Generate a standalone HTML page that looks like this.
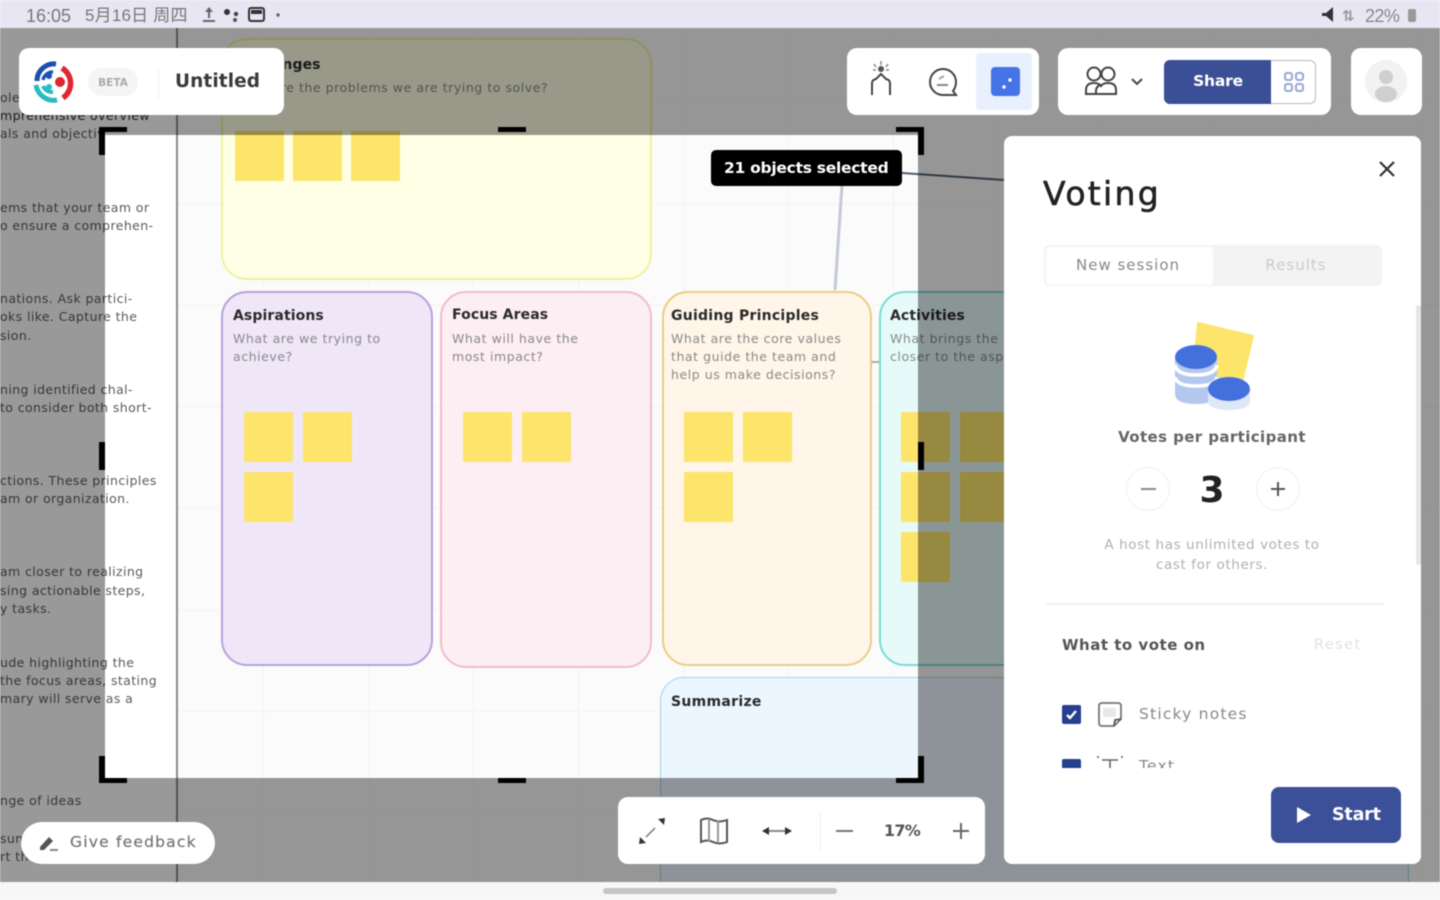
<!DOCTYPE html>
<html lang="zh"><head><meta charset="utf-8"><title>Voting</title>
<style>
html,body{margin:0;padding:0;width:1440px;height:900px;overflow:hidden;background:#fff}
#r{position:absolute;left:0;top:0;width:1440px;height:900px;overflow:hidden;filter:blur(.6px);font-family:"DejaVu Sans","Liberation Sans","Noto Sans CJK SC",sans-serif}
#r div,#r span,#r svg{position:absolute;box-sizing:border-box}
.t{white-space:nowrap;line-height:18px;margin-top:1px}
.c{transform:translateX(-50%)}
.card{border-radius:26px;border:2px solid}
.s{width:49px;height:50px;background:#fde56c}
.h{font-size:14px;font-weight:700;color:#2a2a2a;letter-spacing:.1px;margin-top:2px}
.d{font-size:12.5px;color:#8a8a8a;letter-spacing:.55px}
.l{font-size:12.5px;color:#5c5c5c;letter-spacing:.4px}
.ov{background:rgba(0,0,0,.4)}
.b{background:#000}
.w{background:#fff;border-radius:10px}
</style></head><body><div id="r">

<!-- canvas -->
<div style="left:0;top:28px;width:1440px;height:854px;background-color:#fbfbfb;background-image:linear-gradient(#f3f3f3 1px,transparent 1px),linear-gradient(90deg,#f3f3f3 1px,transparent 1px);background-size:105px 101.6px;background-position:53px -28px"></div>
<div style="left:0;top:28px;width:176px;height:854px;background:#fff"></div>
<div style="left:176px;top:28px;width:2px;height:854px;background:#8b8b8b"></div>

<div class="t l" style="left:0;top:88px">ole</div>
<div class="t l" style="left:0;top:106px;color:#333">mprehensive overview</div>
<div class="t l" style="left:0;top:124px">als and objectiv</div>
<div class="t l" style="left:0;top:198px">ems that your team or</div>
<div class="t l" style="left:0;top:216px">o ensure a comprehen-</div>
<div class="t l" style="left:0;top:289px">nations. Ask partici-</div>
<div class="t l" style="left:0;top:307px">oks like. Capture the</div>
<div class="t l" style="left:0;top:326px">sion.</div>
<div class="t l" style="left:0;top:380px">ning identified chal-</div>
<div class="t l" style="left:0;top:398px">to consider both short-</div>
<div class="t l" style="left:0;top:471px">ctions. These principles</div>
<div class="t l" style="left:0;top:489px">am or organization.</div>
<div class="t l" style="left:0;top:562px">am closer to realizing</div>
<div class="t l" style="left:0;top:581px">sing actionable steps,</div>
<div class="t l" style="left:0;top:599px">y tasks.</div>
<div class="t l" style="left:0;top:653px">ude highlighting the</div>
<div class="t l" style="left:0;top:671px">the focus areas, stating</div>
<div class="t l" style="left:0;top:689px">mary will serve as a</div>
<div class="t l" style="left:0;top:791px">nge of ideas</div>
<div class="t l" style="left:0;top:829px">sum</div>
<div class="t l" style="left:0;top:847px">rt th</div>

<svg style="left:0;top:0" width="1440" height="900"><path d="M902 173L1004 180" stroke="#4f5f70" stroke-width="2" fill="none"/><path d="M842 185L835 290" stroke="#c3cad6" stroke-width="3" fill="none"/><path d="M872 362H880" stroke="#aaa" stroke-width="2"/><path d="M1090 860V882M1168 860V882" stroke="#a8cde6" stroke-width="1.5"/></svg>

<!-- cards -->
<div class="card" style="left:221px;top:38px;width:431px;height:242px;background:#ffffe6;border-color:#eff29c"></div>
<div class="t h" style="left:233px;top:54px;clip-path:inset(0 0 0 52px)">Challenges</div>
<div class="t d" style="left:233px;top:78px;clip-path:inset(0 0 0 50px)">What are the problems we are trying to solve?</div>
<div class="s" style="left:235px;top:131px"></div><div class="s" style="left:293px;top:131px"></div><div class="s" style="left:351px;top:131px"></div>

<div class="card" style="left:221px;top:291px;width:212px;height:375px;background:#efe6f8;border-color:#b9a2d9"></div>
<div class="t h" style="left:233px;top:305px">Aspirations</div>
<div class="t d" style="left:233px;top:329px">What are we trying to</div>
<div class="t d" style="left:233px;top:347px">achieve?</div>
<div class="s" style="left:244px;top:412px"></div><div class="s" style="left:303px;top:412px"></div><div class="s" style="left:244px;top:472px"></div>

<div class="card" style="left:440px;top:291px;width:212px;height:377px;background:#fdeef3;border-color:#f2bccb"></div>
<div class="t h" style="left:452px;top:304px">Focus Areas</div>
<div class="t d" style="left:452px;top:329px">What will have the</div>
<div class="t d" style="left:452px;top:347px">most impact?</div>
<div class="s" style="left:463px;top:412px"></div><div class="s" style="left:522px;top:412px"></div>

<div class="card" style="left:662px;top:291px;width:210px;height:375px;background:#fff5e8;border-color:#eccd86"></div>
<div class="t h" style="left:671px;top:305px;letter-spacing:.25px">Guiding Principles</div>
<div class="t d" style="left:671px;top:329px">What are the core values</div>
<div class="t d" style="left:671px;top:347px">that guide the team and</div>
<div class="t d" style="left:671px;top:365px">help us make decisions?</div>
<div class="s" style="left:684px;top:412px"></div><div class="s" style="left:743px;top:412px"></div><div class="s" style="left:684px;top:472px"></div>

<div class="card" style="left:879px;top:291px;width:230px;height:375px;background:#e6fbf9;border-color:#79ddd2"></div>
<div class="t h" style="left:890px;top:305px">Activities</div>
<div class="t d" style="left:890px;top:329px">What brings the</div>
<div class="t d" style="left:890px;top:347px">closer to the aspi</div>
<div class="s" style="left:901px;top:412px"></div><div class="s" style="left:960px;top:412px"></div><div class="s" style="left:901px;top:472px"></div><div class="s" style="left:960px;top:472px"></div><div class="s" style="left:901px;top:532px"></div>

<div style="left:660px;top:677px;width:749px;height:260px;background:#ebf6fe;border:1.5px solid #a3d2ea;border-radius:24px"></div>
<div class="t h" style="left:671px;top:691px;letter-spacing:.3px">Summarize</div>

<!-- dim overlay -->
<div class="ov" style="left:0;top:28px;width:1440px;height:107px"></div>
<div class="ov" style="left:0;top:778px;width:1440px;height:104px"></div>
<div class="ov" style="left:0;top:135px;width:105px;height:643px"></div>
<div class="ov" style="left:918px;top:135px;width:522px;height:643px"></div>

<!-- handles -->
<div class="b" style="left:99px;top:127px;width:28px;height:5px"></div><div class="b" style="left:99px;top:127px;width:6px;height:28px"></div>
<div class="b" style="left:896px;top:127px;width:28px;height:5px"></div><div class="b" style="left:918px;top:127px;width:6px;height:28px"></div>
<div class="b" style="left:99px;top:778px;width:28px;height:5px"></div><div class="b" style="left:99px;top:756px;width:6px;height:27px"></div>
<div class="b" style="left:896px;top:778px;width:28px;height:5px"></div><div class="b" style="left:918px;top:756px;width:6px;height:27px"></div>
<div class="b" style="left:498px;top:127px;width:28px;height:5px"></div><div class="b" style="left:498px;top:778px;width:28px;height:5px"></div>
<div class="b" style="left:99px;top:442px;width:6px;height:28px"></div><div class="b" style="left:918px;top:442px;width:6px;height:28px"></div>

<div style="left:711px;top:150px;width:191px;height:36px;background:#000;border-radius:5px"></div>
<div class="t" style="left:724px;top:158px;color:#fff;font-size:15.5px;font-weight:700;letter-spacing:-.27px">21 objects selected</div>

<!-- status bar -->
<div style="left:0;top:0;width:1440px;height:28px;background:#e8e6f2"></div>
<div class="t" style="left:26px;top:6px;font-size:18px;color:#777;letter-spacing:0;font-family:'Liberation Sans','Noto Sans CJK SC',sans-serif">16:05</div>
<div class="t" style="left:85px;top:6px;font-size:17px;color:#777;letter-spacing:.2px;font-family:'Liberation Sans','Noto Sans CJK SC',sans-serif">5月16日 周四</div>
<svg style="left:200px;top:5px" width="90" height="20"><path d="M9 2l4 5h-3v6H8V7H5zM3 15h12v2H3z" fill="#666"/><circle cx="27" cy="7" r="3" fill="#333"/><circle cx="36" cy="9" r="2.2" fill="#444"/><circle cx="35" cy="15" r="2" fill="#555"/><rect x="49" y="3" width="15" height="13" rx="2" fill="none" stroke="#333" stroke-width="2"/><path d="M51 5h11v4H51z" fill="#333"/><circle cx="78" cy="10" r="1.7" fill="#666"/></svg>
<svg style="left:1320px;top:6px" width="16" height="17"><path d="M13 1L6 7H2v3h4l7 6z" fill="#333"/></svg>
<div class="t" style="left:1342px;top:6px;font-size:15px;color:#999;font-weight:700">⇅</div>
<div class="t" style="left:1365px;top:6px;font-size:18px;color:#888;letter-spacing:-.6px;font-family:'Liberation Sans',sans-serif">22%</div>
<div style="left:1408px;top:9px;width:8px;height:13px;background:#999;border-radius:2px"></div>

<!-- top-left card -->
<div class="w" style="left:19px;top:48px;width:265px;height:67px"></div>
<svg style="left:33px;top:60px" width="42" height="44" viewBox="0 0 42 44"><path d="M4 21A17 17 0 0 1 23 4" fill="none" stroke="#1c4fae" stroke-width="5"/><path d="M10 20A10 10 0 0 1 20 12" fill="none" stroke="#1c4fae" stroke-width="3.5"/><circle cx="16" cy="16" r="3" fill="#1c4fae"/><path d="M3 25A18 18 0 0 0 24 40" fill="none" stroke="#2bbcc0" stroke-width="5"/><path d="M10 26A10 10 0 0 0 20 32" fill="none" stroke="#2bbcc0" stroke-width="4"/><circle cx="16" cy="27" r="3" fill="#2bbcc0"/><path d="M29 8A18 18 0 0 1 30 38" fill="none" stroke="#e0262e" stroke-width="5.5"/><circle cx="27" cy="22" r="5" fill="#e0262e"/></svg>
<div style="left:88px;top:68px;width:50px;height:28px;background:#f5f5f5;border-radius:14px"></div>
<div class="t c" style="left:113px;top:73px;font-size:10.5px;color:#aaa;font-weight:700">BETA</div>
<div style="left:158px;top:68px;width:1px;height:32px;background:#f0f0f0"></div>
<div class="t" style="left:175px;top:71px;font-size:18.5px;font-weight:700;color:#3a3a3a;line-height:20px;letter-spacing:.1px">Untitled</div>

<!-- top toolbar -->
<div class="w" style="left:847px;top:48px;width:192px;height:67px"></div>
<svg style="left:860px;top:58px" width="42" height="42" fill="none" stroke="#444" stroke-width="2"><path d="M12 37V25q0-3 4-4l5-5 5 5q4 1 4 4v12"/><path d="M21 3v4M14 6l2 3M28 6l-2 3M13 12h3M26 12h3" stroke="#888" stroke-width="1.5"/><circle cx="21" cy="11" r="3" fill="#555" stroke="none"/></svg>
<svg style="left:925px;top:64px" width="36" height="36" fill="none" stroke="#444" stroke-width="2"><path d="M18 5a13 13 0 1 0 0 26h13l-3-4q3-4 3-9A13 13 0 0 0 18 5z"/><path d="M12 21h11" stroke="#888"/><path d="M14 15l5-3" stroke="#aaa"/></svg>
<div style="left:976px;top:53px;width:56px;height:57px;background:#e9f0fd;border-radius:4px"></div>
<div style="left:991px;top:67px;width:29px;height:29px;background:#4673e6;border-radius:4px"></div>
<svg style="left:991px;top:67px" width="29" height="29"><circle cx="19" cy="13" r="1.7" fill="#fff"/><circle cx="13" cy="20" r="1.7" fill="#fff"/></svg>

<div class="w" style="left:1058px;top:48px;width:273px;height:67px"></div>
<svg style="left:1083px;top:64px" width="36" height="34" fill="none" stroke="#444" stroke-width="2"><circle cx="11" cy="10" r="6.5"/><circle cx="25" cy="10" r="6.5"/><path d="M3 30v-4q0-7 8-7 5 0 7 3 2-3 7-3 8 0 8 7v4z"/><path d="M13 30v-3q0-5 5-6"/></svg>
<svg style="left:1129px;top:76px" width="16" height="12" fill="none" stroke="#444" stroke-width="2"><path d="M3 3l5 5 5-5"/></svg>
<div style="left:1164px;top:60px;width:152px;height:44px;background:#fff;border:1.5px solid #bbb;border-radius:6px"></div>
<div style="left:1164px;top:60px;width:107px;height:44px;background:#3a4f96;border-radius:6px 0 0 6px"></div>
<div class="t c" style="left:1218px;top:71px;font-size:15.5px;font-weight:700;color:#fff;letter-spacing:-.2px">Share</div>
<svg style="left:1282px;top:70px" width="24" height="24" fill="none" stroke="#98a8d4" stroke-width="2"><rect x="3" y="3" width="7" height="7" rx="2"/><rect x="14" y="3" width="7" height="7" rx="2"/><rect x="3" y="14" width="7" height="7" rx="2"/><rect x="14" y="14" width="7" height="7" rx="2"/></svg>

<div class="w" style="left:1351px;top:48px;width:71px;height:67px"></div>
<div style="left:1365px;top:60px;width:42px;height:43px;background:#f2f2f2;border-radius:50%"></div>
<svg style="left:1365px;top:60px" width="42" height="43" fill="#cfcfcf"><circle cx="21" cy="17" r="7"/><ellipse cx="21" cy="34" rx="11" ry="8"/></svg>

<!-- voting panel -->
<div class="w" style="left:1004px;top:136px;width:417px;height:728px;border-radius:8px"></div>
<div class="t" style="left:1043px;top:173px;font-size:33px;line-height:40px;font-weight:400;color:#222;letter-spacing:2.3px;-webkit-text-stroke:.6px #222">Voting</div>
<svg style="left:1377px;top:159px" width="20" height="20" stroke="#333" stroke-width="2.2"><path d="M3 3l14 14M17 3L3 17"/></svg>
<div style="left:1044px;top:245px;width:338px;height:41px;background:#f3f3f3;border-radius:5px"></div>
<div style="left:1046px;top:247px;width:167px;height:38px;background:#fff;border-radius:4px"></div>
<div class="t c" style="left:1128px;top:255px;font-size:15px;color:#888;letter-spacing:1px">New session</div>
<div class="t c" style="left:1296px;top:255px;font-size:15px;color:#ccc;letter-spacing:1px">Results</div>
<div style="left:1416px;top:305px;width:5px;height:260px;background:#e6e6e6;border-radius:3px"></div>

<svg style="left:1165px;top:315px" width="100" height="100"><path d="M33 8l55 13-12 50-48-9z" fill="#fde56c" stroke="#fde56c" stroke-width="2" stroke-linejoin="round"/><path d="M10 41v38q0 10 21 10t21-10V41z" fill="#b4c8ee"/><path d="M10 62q2 9 21 9t21-9M10 50q2 10 21 10t21-10" fill="none" stroke="#fff" stroke-width="3.5"/><ellipse cx="31" cy="42" rx="21" ry="12" fill="#4470de"/><path d="M43 74v13q2 8 21 8t21-8V74z" fill="#dfe6f6"/><ellipse cx="64" cy="74" rx="21" ry="12" fill="#4470de"/></svg>

<div class="t c" style="left:1212px;top:427px;font-size:15px;font-weight:700;color:#666;letter-spacing:.4px">Votes per participant</div>
<div style="left:1126px;top:467px;width:44px;height:44px;border:1px solid #eee;border-radius:50%"></div>
<div style="left:1141px;top:488px;width:15px;height:2px;background:#888"></div>
<div class="t c" style="left:1212px;top:471px;font-size:36px;line-height:38px;font-weight:700;color:#222">3</div>
<div style="left:1256px;top:467px;width:44px;height:44px;border:1px solid #eee;border-radius:50%"></div>
<div style="left:1271px;top:488px;width:14px;height:2px;background:#555"></div><div style="left:1277px;top:482px;width:2px;height:14px;background:#555"></div>
<div class="t c" style="left:1212px;top:535px;font-size:13.5px;color:#b0b0b0;letter-spacing:.6px">A host has unlimited votes to</div>
<div class="t c" style="left:1212px;top:555px;font-size:13.5px;color:#b0b0b0;letter-spacing:.6px">cast for others.</div>
<div style="left:1046px;top:603px;width:338px;height:2px;background:#f1f1f1"></div>
<div class="t" style="left:1062px;top:635px;font-size:15px;font-weight:700;color:#555;letter-spacing:.5px">What to vote on</div>
<div class="t" style="left:1314px;top:635px;font-size:14.5px;color:#e2e2e2;letter-spacing:1.4px">Reset</div>
<div style="left:1062px;top:705px;width:19px;height:19px;background:#24408e;border-radius:2px"></div>
<svg style="left:1062px;top:705px" width="19" height="19" fill="none" stroke="#fff" stroke-width="2.4"><path d="M5 10l3 3 6-7"/></svg>
<svg style="left:1096px;top:700px" width="28" height="28" fill="none" stroke="#777" stroke-width="1.8"><path d="M3 6q0-3 3-3h16q3 0 3 3v13l-7 7H6q-3 0-3-3z"/><rect x="7" y="8" width="13" height="9" fill="#e8e8e8" stroke="none"/><path d="M18 26l1-6 6-1" stroke="#555"/></svg>
<div class="t" style="left:1139px;top:704px;font-size:15.5px;color:#888;letter-spacing:1.2px">Sticky notes</div>
<div style="left:1004px;top:755px;width:412px;height:13px;overflow:hidden">
  <div style="left:58px;top:4px;width:19px;height:19px;background:#24408e;border-radius:2px"></div>
  <div class="t" style="left:135px;top:1px;font-size:15.5px;color:#888;letter-spacing:1.2px">Text</div>
  <svg style="left:92px;top:0" width="28" height="13" fill="none" stroke="#666" stroke-width="1.6"><path d="M2 1v2M26 1v2M6 5h16M14 5v8"/></svg>
</div>
<div style="left:1271px;top:787px;width:130px;height:56px;background:#3b5098;border-radius:8px"></div>
<svg style="left:1294px;top:805px" width="20" height="20"><path d="M3 2l14 8-14 8z" fill="#fff"/></svg>
<div class="t" style="left:1332px;top:805px;font-size:17.5px;font-weight:700;color:#fff;letter-spacing:-.2px">Start</div>

<!-- bottom toolbar -->
<div class="w" style="left:618px;top:797px;width:367px;height:67px"></div>
<svg style="left:636px;top:815px" width="32" height="32" fill="none" stroke="#444" stroke-width="1.6"><path d="M19 13l-9 9" stroke="#888"/><path d="M3 29l1-7 6 6z" fill="#333" stroke="none"/><path d="M29 3l-7 1 6 6z" fill="#333" stroke="none"/></svg>
<svg style="left:698px;top:816px" width="32" height="30" fill="none" stroke="#555" stroke-width="2"><path d="M3 4q6-3 12 0 6 3 14 0v22q-8 3-14 0-6-3-12 0z"/><path d="M11 3v23M20 4v23" stroke="#999"/></svg>
<svg style="left:760px;top:822px" width="34" height="18" fill="#333"><path d="M2 9l7-4v8zM32 9l-7-4v8z"/><path d="M9 8h16v2H9z" fill="#888"/></svg>
<div style="left:820px;top:811px;width:1px;height:39px;background:#eee"></div>
<div style="left:836px;top:830px;width:17px;height:2px;background:#777"></div>
<div class="t c" style="left:902px;top:821px;font-size:16px;font-weight:700;color:#555;letter-spacing:-.7px">17%</div>
<div style="left:953px;top:830px;width:16px;height:2px;background:#666"></div><div style="left:960px;top:823px;width:2px;height:16px;background:#666"></div>

<!-- feedback -->
<div style="left:21px;top:822px;width:194px;height:42px;background:#fff;border-radius:21px"></div>
<svg style="left:38px;top:833px" width="24" height="20"><path d="M2 14l9-10 4 4-9 9H2z" fill="#555"/><path d="M12 16h8v2h-8z" fill="#888"/></svg>
<div class="t" style="left:70px;top:832px;font-size:15.5px;color:#777;font-weight:400;letter-spacing:1.2px;-webkit-text-stroke:.25px #777">Give feedback</div>

<!-- bottom nav -->
<div style="left:0;top:882px;width:1440px;height:18px;background:#f7f7f7"></div>
<div style="left:603px;top:888px;width:234px;height:6px;background:#c6c6c6;border-radius:3px"></div>

</div></body></html>
